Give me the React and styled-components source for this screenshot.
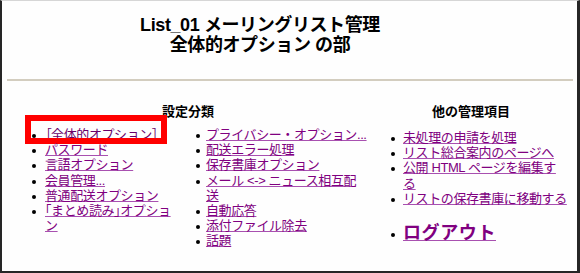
import React from "react";
import styled, { createGlobalStyle } from "styled-components";

const Global = createGlobalStyle`
  html, body { margin: 0; padding: 0; background: #ffffff; }
  body { font-family: "Liberation Sans", "Noto Sans CJK JP", sans-serif; }
`;

const Frame = styled.div`
  box-sizing: border-box;
  width: 580px;
  height: 273px;
  border-top: 1px solid #d6d6d6;
  border-left: 2px solid #262626;
  border-right: 3px solid #262626;
  border-bottom: 2px solid #262626;
  padding: 0 4px 0 5px;
  background: #fefefe;
  color: #000;
  overflow: hidden;
`;

const Title = styled.h2`
  margin: 14px 0 0;
  padding-right: 60px;
  font-size: 18px;
  line-height: 20px;
  font-weight: 700;
  letter-spacing: -0.4px;
  text-align: center;
`;

const Rule = styled.div`
  margin-top: 24px;
  height: 2px;
  background: #d3cdbf;
`;

const Columns = styled.div`
  display: flex;
  margin-top: 23px;
`;

const Section = styled.div`
  flex: 0 0 ${(p) => p.$width}px;
  display: flex;
  flex-direction: column;
`;

const SectionHead = styled.div`
  font-size: 13px;
  line-height: 16px;
  font-weight: 700;
  text-align: center;
`;

const CategoryGrid = styled.div`
  display: grid;
  grid-template-columns: 146px 173px;
  column-gap: 18px;
  padding-left: 25px;
  margin-top: 7px;
`;

const LinkList = styled.ul`
  list-style: none;
  margin: ${(p) => p.$top}px 0 0;
  padding: 0 0 0 ${(p) => p.$indent || 0}px;
  display: flex;
  flex-direction: column;
`;

const Item = styled.li`
  display: flex;
  align-items: flex-start;
  gap: ${(p) => p.$gap}px;
  font-size: ${(p) => (p.$big ? 18 : 13)}px;
  line-height: ${(p) => (p.$big ? 24 : 15.2)}px;
  letter-spacing: ${(p) => (p.$big ? 0.6 : -0.4)}px;
  position: relative;
  width: ${(p) => (p.$marked ? "fit-content" : "auto")};

  &::after {
    content: "";
    display: ${(p) => (p.$marked ? "block" : "none")};
    position: absolute;
    left: -7px;
    right: -9px;
    top: -12px;
    bottom: -2px;
    border: 6px solid #ff0000;
    pointer-events: none;
  }
`;

const Dot = styled.span`
  flex: 0 0 4px;
  width: 4px;
  height: 4px;
  border-radius: 50%;
  background: #000;
  margin-top: ${(p) => (p.$big ? 12 : 7)}px;
`;

const LinkText = styled.a`
  display: block;
  max-width: ${(p) => p.$max}px;
  color: ${(p) => (p.$current ? "#6a006a" : "#800080")};
  text-decoration: underline;
  text-decoration-color: #a850b0;
  text-underline-offset: 1px;
  font-weight: ${(p) => (p.$big ? 700 : 400)};
  cursor: pointer;
`;

const Bracket = styled.span`
  font-feature-settings: "palt";
`;

const col1 = [
  { key: "general", t: <><Bracket>［</Bracket>全体的オプション<Bracket>］</Bracket></>, current: true },
  { key: "passwords", t: "パスワード" },
  { key: "language", t: "言語オプション" },
  { key: "members", t: "会員管理..." },
  { key: "nondigest", t: "普通配送オプション" },
  { key: "digest", t: "｢まとめ読み｣オプション" },
];

const col2 = [
  "プライバシー・オプション...",
  "配送エラー処理",
  "保存書庫オプション",
  "メール <-> ニュース相互配送",
  "自動応答",
  "添付ファイル除去",
  "話題",
];

const other = [
  "未処理の申請を処理",
  "リスト総合案内のページへ",
  "公開 HTML ページを編集する",
  "リストの保存書庫に移動する",
];

export default function App() {
  return (
    <>
      <Global />
      <Frame>
        <Title>
          List_01 メーリングリスト管理
          <br />
          全体的オプション の部
        </Title>
        <Rule />
        <Columns>
          <Section $width={362}>
            <SectionHead>設定分類</SectionHead>
            <CategoryGrid>
              <LinkList $top={0}>
                {col1.map((it) => (
                  <Item key={it.key} $gap={9} $marked={it.current}>
                    <Dot />
                    <LinkText $max={128} $current={it.current}>
                      {it.t}
                    </LinkText>
                  </Item>
                ))}
              </LinkList>
              <LinkList $top={0}>
                {col2.map((t) => (
                  <Item key={t} $gap={6}>
                    <Dot />
                    <LinkText $max={162}>{t}</LinkText>
                  </Item>
                ))}
              </LinkList>
            </CategoryGrid>
          </Section>
          <Section $width={204}>
            <SectionHead>他の管理項目</SectionHead>
            <LinkList $top={10} $indent={22}>
              {other.map((t) => (
                <Item key={t} $gap={8}>
                  <Dot />
                  <LinkText $max={165}>{t}</LinkText>
                </Item>
              ))}
            </LinkList>
            <LinkList $top={15} $indent={22}>
              <Item $gap={8} $big>
                <Dot $big />
                <LinkText $big>ログアウト</LinkText>
              </Item>
            </LinkList>
          </Section>
        </Columns>
      </Frame>
    </>
  );
}
